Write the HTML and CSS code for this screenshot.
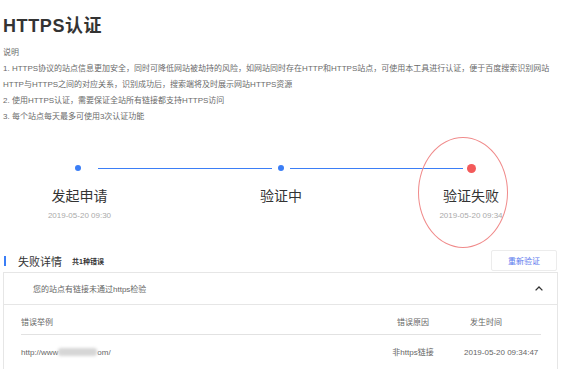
FILE: index.html
```html
<!doctype html>
<html>
<head>
  <meta charset="utf-8">
  <title>HTTPS认证</title>
  <link rel="stylesheet" href="styles.css">
</head>
<body>

  <div class="page">

    <h1 class="title">HTTPS认证</h1>

    <div class="desc">
      <p>说明</p>
      <p>1. HTTPS协议的站点信息更加安全，同时可降低网站被劫持的风险，如网站同时存在HTTP和HTTPS站点，可使用本工具进行认证，便于百度搜索识别网站</p>
      <p>HTTP与HTTPS之间的对应关系，识别成功后，搜索端将及时展示网站HTTPS资源</p>
      <p>2. 使用HTTPS认证，需要保证全站所有链接都支持HTTPS访问</p>
      <p>3. 每个站点每天最多可使用3次认证功能</p>
    </div>

    <div class="steps">
      <div class="track">
        <span class="dot dot1"></span>
        <span class="line line1"></span>
        <span class="dot dot2"></span>
        <span class="line line2"></span>
        <span class="dot dot-fail"></span>
      </div>
      <div class="labels">
        <div class="step">
          <div class="step-name">发起申请</div>
          <div class="step-time">2019-05-20 09:30</div>
        </div>
        <div class="step">
          <div class="step-name">验证中</div>
        </div>
        <div class="step">
          <div class="step-name">验证失败</div>
          <div class="step-time">2019-05-20 09:34</div>
        </div>
      </div>
    </div>

    <!-- hand drawn annotation round the failed step -->
    <div class="mark"></div>

    <div class="section-head">
      <span class="bar"></span>
      <span class="section-title">失败详情</span>
      <span class="section-count">共1种错误</span>
      <button class="retry">重新验证</button>
    </div>

    <div class="panel">
      <div class="panel-head">
        <span>您的站点有链接未通过https检验</span>
        <svg class="caret" width="8" height="5" viewBox="0 0 8 5">
          <polyline points="0.6,4.4 4,1 7.4,4.4" fill="none" stroke="#333" stroke-width="1.3"/>
        </svg>
      </div>
      <div class="panel-body">
        <div class="row row-head">
          <div>错误举例</div>
          <div class="c-reason">错误原因</div>
          <div class="c-time">发生时间</div>
        </div>
        <div class="row">
          <div>http://www<span class="blur"></span>om/</div>
          <div class="c-reason">非https链接</div>
          <div>2019-05-20 09:34:47</div>
        </div>
      </div>
    </div>

  </div>

</body>
</html>
```

FILE: styles.css
```css
body {
  margin: 0;
  background: #fff;
  font-family: "Liberation Sans", "Noto Sans CJK SC", sans-serif;
  color: #666;
}

.page {
  position: relative;
  padding: 0 3px;
}

.title {
  margin: 14px 0 0;
  font-size: 18px;
  line-height: 24px;
  font-weight: bold;
  color: #333;
  letter-spacing: 0.6px;
}

.desc {
  margin-top: 7px;
  font-size: 8px;
  line-height: 16px;
  color: #6a6a6a;
}

.desc p {
  margin: 0;
}

/* steps */
.steps {
  margin-top: 38px;
}

.track {
  display: flex;
  align-items: center;
  height: 10px;
  padding-left: 72px;
}

.dot {
  width: 6px;
  height: 6px;
  border-radius: 50%;
  background: #3b7ef6;
  flex: none;
}

.dot-fail {
  width: 9px;
  height: 9px;
  background: #f35a5a;
  margin-left: 4px;
}

.dot2 {
  margin: 0 6px;
}

.line {
  height: 1px;
  background: #3b7ef6;
  flex: none;
}

.line1 {
  width: 174px;
  margin-left: 17px;
}

.line2 {
  width: 173px;
}

.labels {
  display: grid;
  grid-template-columns: 153px 250px 130px;
  margin-top: 13px;
  text-align: center;
}

.step-name {
  font-size: 14px;
  line-height: 20px;
  color: #333;
}

.step-time {
  margin-top: 4px;
  font-size: 8px;
  line-height: 12px;
  color: #aaa;
}

.mark {
  position: absolute;
  left: 418px;
  top: 123px;
  width: 88px;
  height: 109px;
  border: 1px solid #f08b8b;
  border-radius: 50%;
}

/* failure details */
.section-head {
  display: flex;
  align-items: center;
  height: 21px;
  margin: 28px 0 1px;
}

.bar {
  width: 2px;
  height: 10px;
  background: #3b7ef6;
  margin-left: 1px;
}

.section-title {
  margin-left: 12px;
  font-size: 11px;
  color: #333;
}

.section-count {
  margin-left: 10px;
  font-size: 7px;
  font-weight: bold;
  color: #333;
}

.retry {
  margin-left: auto;
  margin-right: 1px;
  width: 66px;
  height: 21px;
  padding: 0;
  border: 1px solid #ececec;
  border-radius: 2px;
  background: #fff;
  font-family: inherit;
  font-size: 8px;
  color: #5a78ee;
}

.panel {
  border: 1px solid #e6e6e6;
  border-bottom: 0;
  height: 100px;
}

.panel-head {
  display: flex;
  align-items: center;
  justify-content: space-between;
  height: 31px;
  padding: 0 14px 0 29px;
  border-bottom: 1px solid #e6e6e6;
  font-size: 8px;
}

.caret {
  display: block;
}

.panel-body {
  padding: 0 16px 0 17px;
}

.row {
  display: grid;
  grid-template-columns: 1fr 102px 77px;
  padding-top: 12px;
  font-size: 8px;
  line-height: 12px;
  white-space: nowrap;
}

.row-head {
  padding-bottom: 5px;
  border-bottom: 1px solid #e2e2e2;
}

.c-reason {
  text-align: center;
}

.c-time {
  padding-left: 6px;
}

.blur {
  display: inline-block;
  width: 39px;
  height: 8px;
  vertical-align: -1px;
  background: #d6d6d6;
  border-radius: 3px;
  filter: blur(1.5px);
}
```
